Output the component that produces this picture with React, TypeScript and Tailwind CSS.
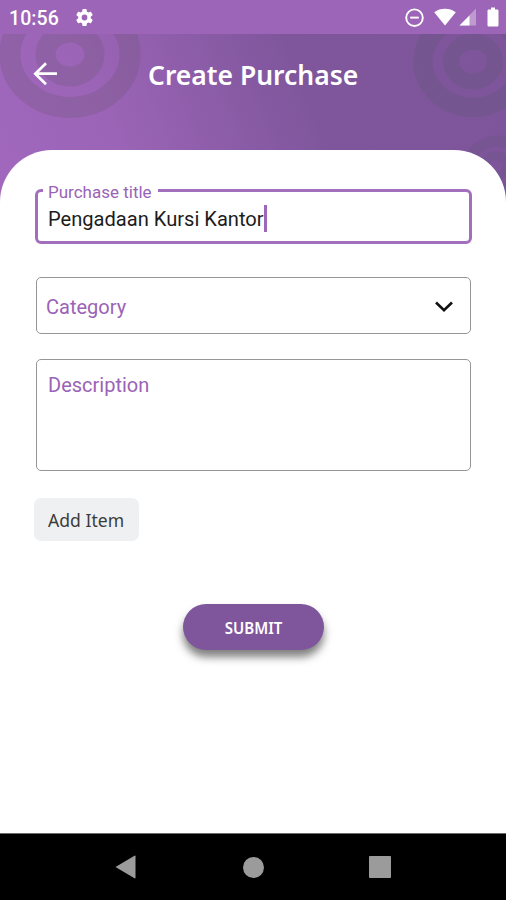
import { useState } from "react";
import type { ReactNode } from "react";

function StatusBar() {
  return (
    <div className="flex h-[34px] items-center justify-between bg-[#9d65b8] pl-[9px] pr-[7px] text-white">
      <div className="flex items-center">
        <span className="mt-[3px] w-[65px] font-['Roboto',sans-serif] text-[19.5px] leading-none font-medium tracking-[0.1px]">
          10:56
        </span>
        <svg width="21" height="21" viewBox="0 0 24 24" fill="currentColor">
          <path d="M19.14 12.94c.04-.3.06-.61.06-.94 0-.32-.02-.64-.07-.94l2.03-1.58a.49.49 0 0 0 .12-.61l-1.92-3.32a.49.49 0 0 0-.59-.22l-2.39.96a7 7 0 0 0-1.62-.94l-.36-2.54a.48.48 0 0 0-.48-.41h-3.84a.47.47 0 0 0-.47.41l-.36 2.54c-.59.24-1.13.57-1.62.94l-2.39-.96a.48.48 0 0 0-.59.22L2.74 8.87a.47.47 0 0 0 .12.61l2.03 1.58a6.6 6.6 0 0 0-.02 1.88l-2.03 1.58a.49.49 0 0 0-.12.61l1.92 3.32c.12.22.37.29.59.22l2.39-.96c.5.38 1.03.7 1.62.94l.36 2.54c.05.24.24.41.48.41h3.84c.24 0 .44-.17.47-.41l.36-2.54a6.8 6.8 0 0 0 1.62-.94l2.39.96c.22.08.47 0 .59-.22l1.92-3.32a.47.47 0 0 0-.12-.61zM12 15.3a3.3 3.3 0 1 1 0-6.6 3.3 3.3 0 0 1 0 6.6z" />
        </svg>
      </div>
      <div className="flex items-center">
        {/* Do not disturb */}
        <svg className="mr-[9px]" width="20" height="20" viewBox="0 0 20 20">
          <circle cx="9.5" cy="10.7" r="8.3" fill="none" stroke="currentColor" strokeWidth="1.9" />
          <path d="M5.2 10.6h8.6" stroke="currentColor" strokeWidth="1.9" />
        </svg>
        {/* Wifi */}
        <svg className="mr-[3px]" width="22" height="20" viewBox="0 0 22 20" fill="currentColor">
          <path d="M11 18.5 0.2 5.3C6.5 0.7 15.5 0.7 21.8 5.3Z" />
        </svg>
        {/* Signal */}
        <svg className="mr-[10px]" width="18" height="20" viewBox="0 0 18 20" fill="currentColor">
          <path d="M17 1.5v17H0.5Z" opacity="0.35" />
          <path d="M10.5 8.5v10H0.5Z" />
        </svg>
        {/* Battery */}
        <svg width="12" height="20" viewBox="0 0 12 20" fill="currentColor">
          <path d="M4 0.5h4v2h2.2c.7 0 1.3.6 1.3 1.3v14.4c0 .7-.6 1.3-1.3 1.3H1.8c-.7 0-1.3-.6-1.3-1.3V3.8c0-.7.6-1.3 1.3-1.3H4Z" />
        </svg>
      </div>
    </div>
  );
}

function HeaderRings() {
  return (
    <svg className="absolute inset-0" width="506" height="170" viewBox="0 34 506 170" fill="none">
      <g stroke="#6a5472" strokeOpacity="0.27">
        <ellipse cx="70" cy="54.5" rx="60" ry="53" strokeWidth="21" />
        <ellipse cx="70" cy="54.5" rx="24.5" ry="22" strokeWidth="20" />
      </g>
      <g stroke="#5c5670" strokeOpacity="0.28">
        <ellipse cx="473" cy="61.5" rx="50" ry="46" strokeWidth="19" />
        <ellipse cx="473" cy="61.5" rx="22" ry="20" strokeWidth="16" />
      </g>
      <g stroke="#5c5670" strokeOpacity="0.2">
        <ellipse cx="496" cy="166" rx="26" ry="25" strokeWidth="11" />
        <ellipse cx="496" cy="166" rx="11" ry="10" strokeWidth="9" />
      </g>
    </svg>
  );
}

function Header() {
  return (
    <div className="relative h-[170px] bg-[linear-gradient(68deg,#a168be_0%,#9b64b6_25%,#7f569c_61%,#7e559b_100%)]">
      <HeaderRings />
      <div className="relative flex h-[80px] items-center text-white">
        <button className="ml-[33px] w-[115px]" type="button" aria-label="Back">
          <svg width="25" height="24" viewBox="0 0 25 24" fill="none" stroke="currentColor" strokeWidth="2.7">
            <path d="M13 1.3 2.3 11.7 13 22.2M2.3 11.7H24" />
          </svg>
        </button>
        <h1 className="origin-left scale-x-[0.98] whitespace-nowrap font-['Noto_Sans',sans-serif] text-[27px] leading-none font-semibold">
          Create Purchase
        </h1>
      </div>
    </div>
  );
}

function OutlinedBox({ className, children }: { className: string; children: ReactNode }) {
  return (
    <div
      className={`mr-px ml-px flex rounded-[5px] border border-[#969696] font-['Roboto',sans-serif] text-[20px] leading-[24px] text-[#9a63b6] ${className}`}
    >
      {children}
    </div>
  );
}

function NavBar() {
  return (
    <div className="flex h-[67px] items-center border-t border-[#6b6b6b] bg-black pl-[115px] text-[#9b9b9b]">
      <svg width="21" height="24" viewBox="0 0 21 24" fill="currentColor">
        <path d="M0.5 12 19.5 0.7c.6-.3 1 0 1 .6v21.4c0 .6-.4.9-1 .6Z" />
      </svg>
      <div className="ml-[107px] size-[21px] rounded-full bg-[#9b9b9b]" />
      <div className="ml-[105px] h-[22px] w-[22px] rounded-[1px] bg-[#9b9b9b]" />
    </div>
  );
}

export default function App() {
  const [title] = useState("Pengadaan Kursi Kantor");

  return (
    <div className="flex h-[900px] w-[506px] flex-col overflow-hidden bg-white">
      <StatusBar />
      <Header />

      <form className="relative -mt-[54px] flex flex-1 flex-col rounded-t-[52px] bg-white pt-[39px] pr-[34px] pl-[35px]">
        {/* Purchase title */}
        <div className="relative flex h-[55px] items-center rounded-[6px] border-[3px] border-[#a26fbc] pl-[10px] font-['Roboto',sans-serif]">
          <label className="absolute -top-[10px] left-[5px] bg-white pr-[6px] pl-[5px] text-[17px] leading-[20px] whitespace-nowrap text-[#9a63b6]">
            Purchase title
          </label>
          <span className="mt-[5px] text-[20.1px] leading-[26px] whitespace-nowrap text-[#1c1c1c]">{title}</span>
          <span className="mt-[3px] h-[27px] w-[3px] bg-[#9d68b8]" />
        </div>

        <OutlinedBox className="mt-[33px] h-[57px] items-center justify-between pt-[3px] pr-[16px] pl-[9px]">
          Category
          <svg width="20" height="12" viewBox="0 0 20 12" fill="none" stroke="#111" strokeWidth="2.6">
            <path d="M2 1.5 10 9.3 18 1.5" />
          </svg>
        </OutlinedBox>

        <OutlinedBox className="mt-[25px] h-[112px] pt-[13px] pl-[11px]">Description</OutlinedBox>

        <button
          type="button"
          className="mt-[27px] -ml-px h-[43px] w-[105px] rounded-[7px] bg-[#eef0f1] pt-[2px] font-['Noto_Sans',sans-serif] text-[18.5px] leading-none text-[#3c3c3c]"
        >
          <span className="inline-block scale-x-[0.95] whitespace-nowrap">Add Item</span>
        </button>

        <button
          type="button"
          className="mt-[63px] h-[46px] w-[141px] self-center rounded-full bg-[#7f569c] pt-[2px] font-['Noto_Sans',sans-serif] text-[16px] leading-none font-semibold text-white shadow-[0_7px_9px_rgba(0,0,0,0.5)]"
        >
          <span className="inline-block scale-x-[0.94]">SUBMIT</span>
        </button>
      </form>

      <NavBar />
    </div>
  );
}
